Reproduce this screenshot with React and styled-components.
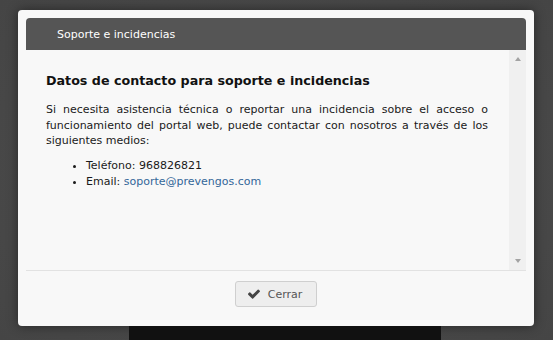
import React from 'react';
import styled, { createGlobalStyle } from 'styled-components';

const GlobalStyle = createGlobalStyle`
  html, body {
    margin: 0;
    padding: 0;
    background: #4a4a4a;
    font-family: "DejaVu Sans", Verdana, sans-serif;
    overflow: hidden;
  }
`;

const Page = styled.div`
  width: 553px;
  height: 340px;
  display: flex;
  flex-direction: column;
  background: radial-gradient(ellipse at center, #4d4d4d 0%, #454545 100%);
`;

const Dialog = styled.div`
  margin: 10px 0 0 18px;
  width: 516px;
  height: 316px;
  box-sizing: border-box;
  padding: 8px 8px 0;
  background: #f8f8f8;
  border-radius: 4px;
  box-shadow: 0 0 12px rgba(0, 0, 0, 0.45);
  display: flex;
  flex-direction: column;
`;

const Header = styled.div`
  height: 32px;
  flex-shrink: 0;
  background: #555555;
  border-radius: 4px 4px 0 0;
  display: flex;
  align-items: center;
  padding-left: 31px;
  color: #ffffff;
  font-size: 11px;
`;

const Body = styled.div`
  height: 220px;
  display: flex;
  border-bottom: 1px solid #e2e2e2;
`;

const Content = styled.div`
  flex: 1;
  padding: 22px 21px 0 20px;
  color: #1a1a1a;
`;

const Heading = styled.h3`
  margin: 0 0 12px;
  font-size: 12.7px;
  line-height: 18px;
  font-weight: bold;
  color: #111;
`;

const Paragraph = styled.p`
  margin: 0;
  font-size: 11px;
  line-height: 15.5px;
  text-align: justify;
`;

const List = styled.ul`
  margin: 9px 0 0;
  padding-left: 40px;
  font-size: 11px;
  line-height: 16px;
`;

const Link = styled.a`
  color: #336699;
  text-decoration: none;
`;

const Scrollbar = styled.div`
  width: 17px;
  background: #f0f0f0;
  display: flex;
  flex-direction: column;
  justify-content: space-between;
  align-items: center;
  padding: 7px 0;
`;

const Arrow = styled.div`
  width: 0;
  height: 0;
  border-left: 3.5px solid transparent;
  border-right: 3.5px solid transparent;
  ${p => p.$down ? 'border-top: 4px solid #a3a3a3;' : 'border-bottom: 4px solid #a3a3a3;'}
`;

const Footer = styled.div`
  flex: 1;
  display: flex;
  justify-content: center;
  align-items: flex-start;
  padding-top: 10px;
`;

const Button = styled.button`
  height: 26px;
  box-sizing: border-box;
  display: flex;
  align-items: center;
  gap: 8px;
  padding: 0 14px 0 12px;
  background: #eeeeee;
  border: 1px solid #cfcfcf;
  border-radius: 3px;
  color: #555;
  font-family: "DejaVu Sans", Verdana, sans-serif;
  font-size: 11px;
  cursor: pointer;
`;

const Behind = styled.div`
  margin-left: 129px;
  width: 312px;
  flex: 1;
  background: #111111;
`;

const CheckIcon = () => (
  <svg width="12" height="10" viewBox="121 300 1550 1230">
    <path
      fill="#444"
      d="M1671 566q0 40-28 68l-724 724-136 136q-28 28-68 28t-68-28l-136-136-362-362q-28-28-28-68t28-68l136-136q28-28 68-28t68 28l294 295 656-657q28-28 68-28t68 28l136 136q28 28 28 68z"
    />
  </svg>
);

const App = () => (
  <Page>
    <GlobalStyle />
    <Dialog>
      <Header>Soporte e incidencias</Header>
      <Body>
        <Content>
          <Heading>Datos de contacto para soporte e incidencias</Heading>
          <Paragraph>
            Si necesita asistencia técnica o reportar una incidencia sobre el acceso o
            funcionamiento del portal web, puede contactar con nosotros a través de los
            siguientes medios:
          </Paragraph>
          <List>
            <li>Teléfono: 968826821</li>
            <li>Email: <Link href="#">soporte@prevengos.com</Link></li>
          </List>
        </Content>
        <Scrollbar>
          <Arrow />
          <Arrow $down />
        </Scrollbar>
      </Body>
      <Footer>
        <Button><CheckIcon />Cerrar</Button>
      </Footer>
    </Dialog>
    <Behind />
  </Page>
);

export default App;
